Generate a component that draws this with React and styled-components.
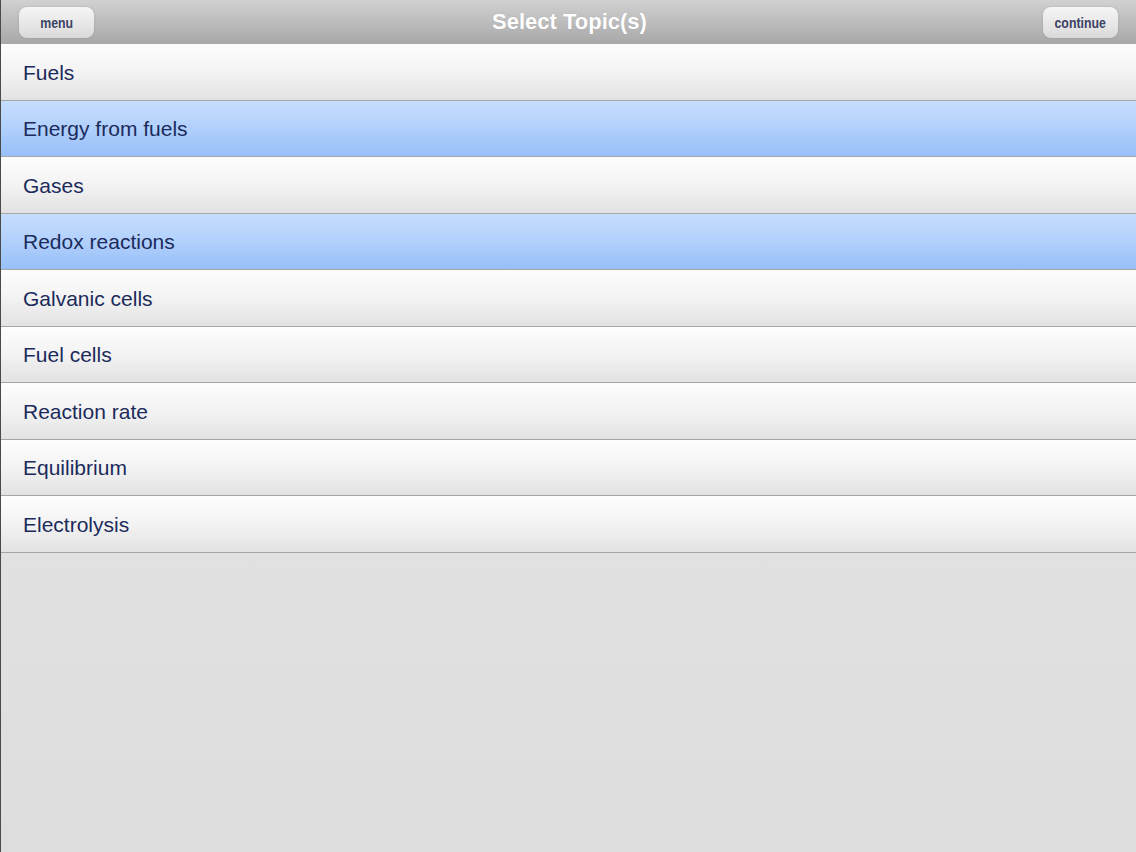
import React from 'react';
import styled, { createGlobalStyle } from 'styled-components';

const GlobalStyle = createGlobalStyle`
    html, body {
        margin: 0;
        padding: 0;
        height: 100%;
    }
    body {
        font-family: "Liberation Sans", Arial, sans-serif;
        background: #e4e4e4;
    }
    #root {
        height: 100%;
    }
`;

const Screen = styled.div`
    width: 1136px;
    height: 852px;
    display: flex;
    flex-direction: column;
    border-left: 1px solid #4a4a4a;
    box-sizing: border-box;
    background: linear-gradient(180deg, #e9e9e9 0%, #dddddd 100%);
    overflow: hidden;
`;

const Toolbar = styled.header`
    height: 44px;
    flex: none;
    display: flex;
    align-items: center;
    justify-content: space-between;
    padding: 0 18px 0 18px;
    background: linear-gradient(180deg, #d2d1d2 0%, #bdbcbd 50%, #a9a8a9 100%);
    box-sizing: border-box;
`;

const BarButton = styled.button`
    width: 75px;
    height: 31px;
    margin-top: 1px;
    border: none;
    border-radius: 8px;
    background: linear-gradient(180deg, #f5f5f5 0%, #e6e6e6 60%, #d9d9d9 100%);
    box-shadow: 0 0 2px rgba(0, 0, 0, 0.18);
    padding: 0;
    display: flex;
    align-items: center;
    justify-content: center;
`;

const ButtonLabel = styled.span`
    display: inline-block;
    color: #3c4365;
    font-family: "Liberation Sans", Arial, sans-serif;
    font-size: 14px;
    font-weight: bold;
    transform: scaleX(0.88);
`;

const Title = styled.h1`
    margin: 0 0 0 2px;
    color: #ffffff;
    font-size: 22px;
    font-weight: bold;
    text-shadow: 0 0 1px rgba(0, 0, 0, 0.15);
`;

const List = styled.ul`
    list-style: none;
    margin: 0;
    padding: 0;
`;

const Row = styled.li`
    height: 56.5px;
    box-sizing: border-box;
    display: flex;
    align-items: center;
    padding: 2px 0 0 22px;
    border-bottom: 1px solid #a6a6a6;
    font-size: 21px;
    color: #1b2b5b;
    background: ${p => p.$selected
        ? 'linear-gradient(180deg, #c6defe 0%, #b1d0fc 50%, #97bff9 100%)'
        : 'linear-gradient(180deg, #fdfdfd 0%, #f3f3f3 50%, #e2e2e2 100%)'};
`;

const topics = [
    { name: 'Fuels' },
    { name: 'Energy from fuels', selected: true },
    { name: 'Gases' },
    { name: 'Redox reactions', selected: true },
    { name: 'Galvanic cells' },
    { name: 'Fuel cells' },
    { name: 'Reaction rate' },
    { name: 'Equilibrium' },
    { name: 'Electrolysis' },
];

function App() {
    return (
        <>
            <GlobalStyle />
            <Screen>
                <Toolbar>
                    <BarButton><ButtonLabel>menu</ButtonLabel></BarButton>
                    <Title>Select Topic(s)</Title>
                    <BarButton><ButtonLabel>continue</ButtonLabel></BarButton>
                </Toolbar>
                <List>
                    {topics.map(t => (
                        <Row key={t.name} $selected={t.selected}>{t.name}</Row>
                    ))}
                </List>
            </Screen>
        </>
    );
}

export default App;
